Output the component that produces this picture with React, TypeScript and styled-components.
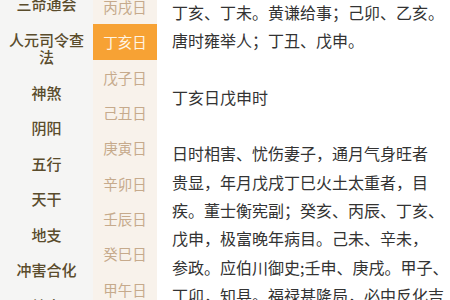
import React from 'react';
import styled, { createGlobalStyle } from 'styled-components';

const GlobalStyle = createGlobalStyle`
  html, body {
    margin: 0;
    padding: 0;
    overflow: hidden;
    background: #ffffff;
  }
  body {
    font-family: "Noto Sans CJK SC", "Noto Sans", sans-serif;
  }
`;

const Page = styled.div`
  display: flex;
  width: 450px;
  height: 300px;
  overflow: hidden;
  background: #ffffff;
`;

const CategoryColumn = styled.nav`
  width: 93px;
  flex-shrink: 0;
  background: #f5f5f4;
  overflow: hidden;
`;

const CategoryList = styled.ul`
  list-style: none;
  margin: -14px 0 0;
  padding: 0;
`;

const Category = styled.li`
  padding: 9px 6px;
  text-align: center;
  font-size: 15px;
  line-height: 17.5px;
  font-weight: 500;
  color: #5a4c2c;
`;

const DayColumn = styled.div`
  width: 64px;
  flex-shrink: 0;
  background: #f8f2eb;
  overflow: hidden;
`;

const DayList = styled.ul`
  list-style: none;
  margin: -11px 0 0;
  padding: 0;
`;

const Day = styled.li<{ $active?: boolean }>`
  height: 35.3px;
  display: flex;
  align-items: center;
  justify-content: center;
  font-size: 14.5px;
  color: ${p => (p.$active ? '#fff4e2' : '#c6aa8c')};
  background: ${p => (p.$active ? '#f7a234' : 'transparent')};
`;

const Content = styled.article`
  flex: 1;
  padding: 0 6px 0 15px;
  overflow: hidden;
  color: #333333;
  font-size: 16px;
  line-height: 28.3px;
`;

const Body = styled.div`
  margin-top: -2px;
`;

const Line = styled.div`
  white-space: nowrap;
`;

const Blank = styled.div`
  height: 28.3px;
`;

const categories = ['三命通会', '人元司令查法', '神煞', '阴阳', '五行', '天干', '地支', '冲害合化', '纳音'];
const days = ['丙戌日', '丁亥日', '戊子日', '己丑日', '庚寅日', '辛卯日', '壬辰日', '癸巳日', '甲午日', '乙未日'];

const intro = ['丁亥、丁未。黄谦给事；己卯、乙亥。', '唐时雍举人；丁丑、戊申。'];
const detail = [
  '日时相害、忧伤妻子，通月气身旺者',
  '贵显，年月戊戌丁巳火土太重者，目',
  '疾。董士衡宪副；癸亥、丙辰、丁亥、',
  '戊申，极富晚年病目。己未、辛未，',
  '参政。应伯川御史;壬申、庚戌。甲子、',
  '丁卯，知县。福禄甚隆局，必中反化吉',
];

export default function App() {
  return (
    <>
      <GlobalStyle />
      <Page>
        <CategoryColumn>
          <CategoryList>
            {categories.map(c => (
              <Category key={c}>{c}</Category>
            ))}
          </CategoryList>
        </CategoryColumn>
        <DayColumn>
          <DayList>
            {days.map(d => (
              <Day key={d} $active={d === '丁亥日'}>{d}</Day>
            ))}
          </DayList>
        </DayColumn>
        <Content>
          <Body>
            {intro.map(l => <Line key={l}>{l}</Line>)}
            <Blank />
            <Line>丁亥日戊申时</Line>
            <Blank />
            {detail.map(l => <Line key={l}>{l}</Line>)}
          </Body>
        </Content>
      </Page>
    </>
  );
}
